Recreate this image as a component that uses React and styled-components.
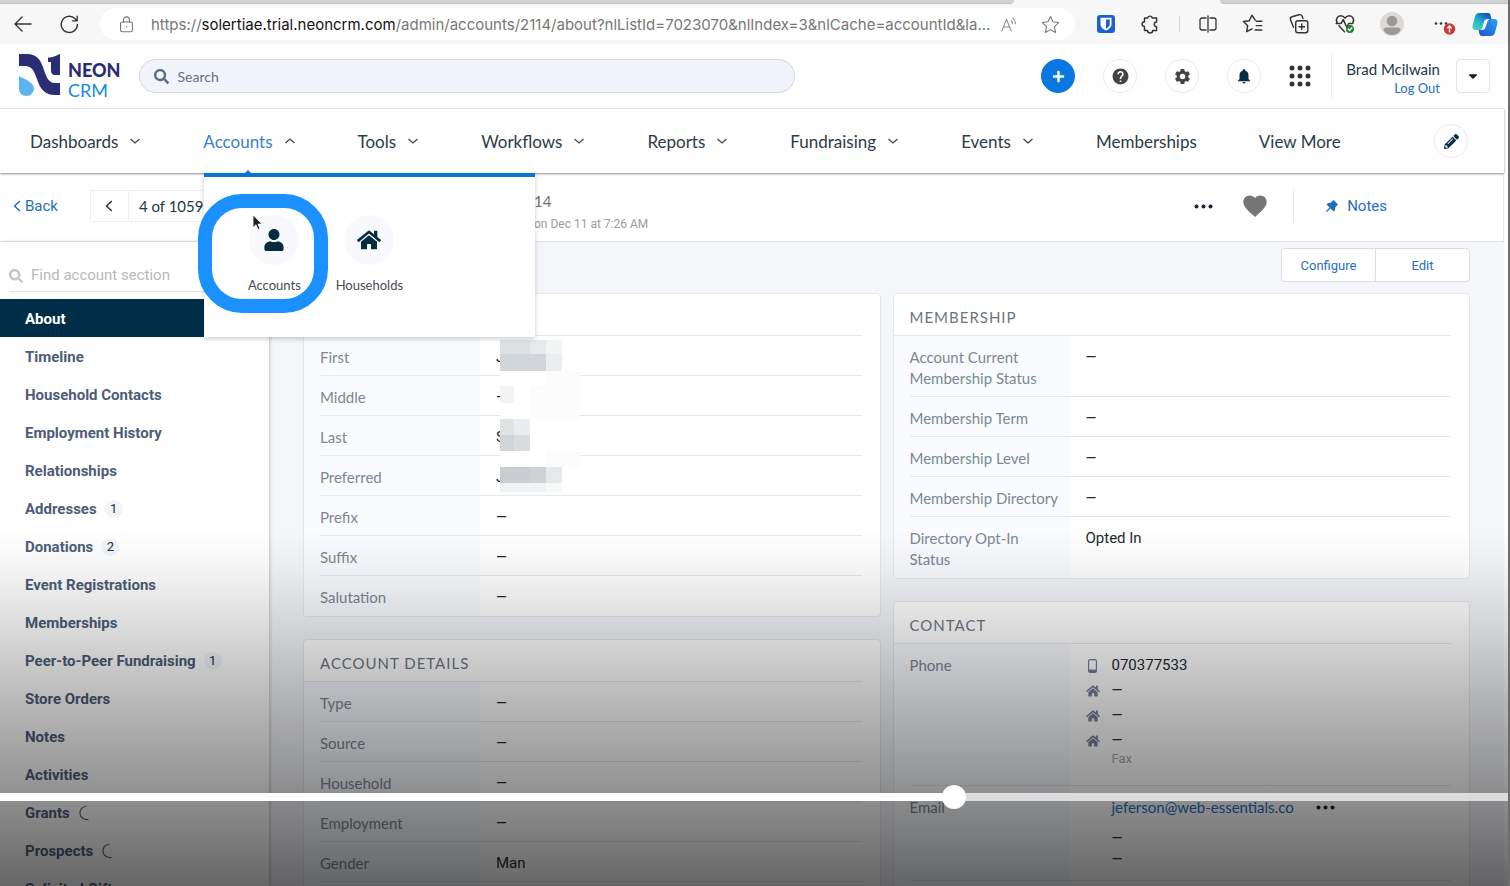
import React, { useState } from "react";
import styled, { createGlobalStyle } from "styled-components";
import {
    FaSearch,
    FaPlus,
    FaUser,
    FaHome,
    FaCaretDown,
    FaPencilAlt,
} from "react-icons/fa";
import { MdHelp, MdSettings, MdNotifications, MdFavorite } from "react-icons/md";
import { AiFillPushpin } from "react-icons/ai";

const GlobalStyle = createGlobalStyle`
    * {
        box-sizing: border-box;
    }

    body {
        margin: 0;
        font-family: Lato, sans-serif;
        font-size: 15px;
        line-height: 21px;
        color: #243746;
        background: #fff;
    }

    button, input {
        font: inherit;
        color: inherit;
        border: 0;
        padding: 0;
        margin: 0;
        background: none;
    }

    a {
        text-decoration: none;
        color: #1f70c1;
    }

    svg {
        display: block;
        flex: none;
    }
`;

const Screen = styled.div`
    position: relative;
    height: 100vh;
    overflow: hidden;
    display: flex;
    flex-direction: column;
    border-right: 2px solid #6d6d6d;
    background: #fefefe;
`;

/* ---------- browser chrome ---------- */

const TabStrip = styled.div`
    flex: none;
    display: flex;
    justify-content: flex-end;
    height: 4px;
    background: #f7f7f7;
`;

const InactiveTabs = styled.div`
    flex: ${(props) => props.$grow};
    background: #d2d2d2;
    border-bottom: 1px solid #c2c2c2;
    border-radius: ${(props) => (props.$end ? "0 0 0 6px" : "0 0 6px 0")};
`;

const TabGap = styled.div`
    flex: 206;
`;

const BrowserBar = styled.div`
    flex: none;
    display: flex;
    align-items: center;
    height: 40px;
    padding: 0 10px 0 13px;
    background: #f7f7f7;
    color: #333;
`;

const BrowserButton = styled.button`
    display: flex;
    margin-right: ${(props) => props.$after || 0}px;
`;

const AddressBar = styled.div`
    flex: 1;
    min-width: 0;
    display: flex;
    align-items: center;
    height: 32px;
    margin-right: 22px;
    padding: 0 15px 0 18px;
    border-radius: 16px;
    background: #fff;
`;

const Url = styled.div`
    flex: 1;
    min-width: 0;
    margin: 0 4px 0 16px;
    overflow: hidden;
    white-space: nowrap;
    text-overflow: ellipsis;
    font-family: Inter, sans-serif;
    font-size: 15px;
    color: #777;

    b {
        font-weight: 400;
        color: #111;
    }
`;

const BrowserTools = styled.div`
    display: flex;
    align-items: center;
    gap: 24px;
`;

const ToolDivider = styled.div`
    width: 1px;
    height: 16px;
    margin: 0 -6px;
    background: #d8d8d8;
`;

const MoreIcon = styled.svg`
    overflow: visible;
`;

/* ---------- app header ---------- */

const TopBar = styled.header`
    flex: none;
    display: flex;
    align-items: center;
    height: 65px;
    margin-right: 4px;
    padding: 0 14px 0 18px;
    border-bottom: 1px solid #ececee;
`;

const Brand = styled.a`
    display: flex;
    gap: 8px;
    margin-right: 18px;
`;

const BrandText = styled.span`
    display: flex;
    flex-direction: column;
    padding-top: 7px;
    font-size: 18px;
    line-height: 20px;
    color: #148be0;

    b {
        font-weight: 900;
        color: #2a2d74;
    }
`;

const SearchBox = styled.label`
    flex: 0 1 656px;
    display: flex;
    align-items: center;
    gap: 9px;
    height: 34px;
    padding: 0 14px;
    border: 1px solid #d0d5df;
    border-radius: 17px;
    background: #f1f4fa;
    color: #5d6a83;

    input {
        flex: 1;
        font-size: 14px;
        outline: 0;
    }

    input::placeholder {
        color: #66717f;
        opacity: 1;
    }
`;

const Actions = styled.div`
    display: flex;
    align-items: center;
    gap: 28px;
    margin-left: auto;
`;

const RoundButton = styled.button`
    display: flex;
    align-items: center;
    justify-content: center;
    width: 34px;
    height: 34px;
    border: 1px solid ${(props) => (props.$primary ? "#0a78e0" : "#ebebee")};
    border-radius: 50%;
    background: ${(props) => (props.$primary ? "#0a78e0" : "#fff")};
    color: ${(props) => (props.$primary ? "#fff" : props.$color || "#444")};
`;

const UserBlock = styled.div`
    margin: 0 16px 0 20px;
    padding: 6px 0 0 14px;
    border-left: 1px solid #ececee;
    text-align: right;
    line-height: 19px;

    a {
        display: block;
        font-size: 13px;
    }
`;

const UserMenuButton = styled.button`
    display: flex;
    align-items: center;
    justify-content: center;
    width: 34px;
    height: 34px;
    border: 1px solid #e6e6e9;
    border-radius: 4px;
    color: #222;
`;

const NavBar = styled.nav`
    position: relative;
    z-index: 2;
    flex: none;
    display: flex;
    align-items: center;
    gap: 62px;
    height: 64px;
    margin-right: 4px;
    padding: 0 36px 0 30px;
    background: #fefefe;
    box-shadow: 0 1px 2px #8f8f8f;

    > ${RoundButton} {
        margin-left: auto;
    }
`;

const NavItem = styled.div`
    position: relative;
    display: flex;
    align-items: center;
    height: 64px;
`;

const NavButton = styled.button`
    display: flex;
    align-items: center;
    gap: 11px;
    font-size: 17px;
    white-space: nowrap;
    color: ${(props) => (props.$open ? "#3a7fd0" : "#2b3c49")};

    svg {
        color: #3c4852;
    }
`;

const MegaMenu = styled.div`
    position: absolute;
    top: 64px;
    left: 1px;
    display: flex;
    gap: 21px;
    width: 331px;
    height: 164px;
    padding: 38px 33px;
    border-top: 4px solid #0a74d6;
    background: #fff;
    box-shadow: 0 2px 5px rgba(0, 0, 0, 0.2);

    &::before {
        content: "";
        position: absolute;
        top: -7px;
        left: 40px;
        border: 4px solid transparent;
        border-top: 0;
        border-bottom-color: #0a74d6;
    }
`;

const MenuTile = styled.a`
    display: flex;
    flex-direction: column;
    align-items: center;
    gap: 10px;
    width: 74px;
    font-size: 13px;
    color: #444c54;
`;

const TileIcon = styled.span`
    display: flex;
    align-items: center;
    justify-content: center;
    width: 50px;
    height: 50px;
    border-radius: 50%;
    background: #f8f9fc;
    color: #052c40;
`;

/* ---------- record header ---------- */

const RecordBar = styled.div`
    flex: none;
    display: flex;
    align-items: center;
    height: 69px;
    margin-right: 4px;
    padding: 0 116px 2px 13px;
    border-right: 1px solid #e6e6e8;
    border-bottom: 1px solid #e2e3e6;
    background: #fff;
`;

const BackLink = styled.a`
    display: flex;
    align-items: center;
    gap: 4px;
    margin-right: 32px;
    font-family: Roboto, sans-serif;
`;

const Pager = styled.div`
    display: flex;
    align-items: center;
    height: 32px;
    width: 444px;
    border: 1px solid #eee;

    button {
        display: flex;
        align-items: center;
        justify-content: center;
        width: 38px;
        height: 30px;
        margin-right: 10px;
        border-right: 1px solid #eee;
    }
`;

const RecordMeta = styled.div`
    margin-top: 14px;
    line-height: 23px;
    color: #6b7076;

    small {
        display: block;
        font-family: Roboto, sans-serif;
        font-size: 12px;
        color: #9a9da1;
    }
`;

const RecordTools = styled.div`
    display: flex;
    align-items: center;
    gap: 28px;
    margin-left: auto;
    color: #757575;
`;

const NotesLink = styled.a`
    display: flex;
    align-items: center;
    gap: 7px;
    height: 32px;
    margin-left: -4px;
    padding-left: 30px;
    border-left: 1px solid #e6e6e8;
    font-family: Roboto, sans-serif;
`;

/* ---------- body ---------- */

const Body = styled.div`
    flex: 1;
    min-height: 0;
    display: flex;
    margin-right: 4px;
    background: #f5f6fa;
`;

const Sidebar = styled.aside`
    flex: none;
    width: 269px;
    background: #fff;
    box-shadow: 1px 0 3px #c0c2c8;
    font-family: Roboto, sans-serif;
    color: #3d4d66;
`;

const SectionSearch = styled.label`
    display: flex;
    align-items: center;
    gap: 8px;
    height: 34px;
    margin: 16px 12px 7px 9px;
    padding-top: 2px;
    border-bottom: 1px solid #e4e4e6;
    color: #c0c2c5;

    input {
        flex: 1;
        min-width: 0;
        outline: 0;
    }

    input::placeholder {
        color: #b6b9bd;
        opacity: 1;
    }
`;

const SectionLink = styled.a`
    display: flex;
    align-items: center;
    gap: 8px;
    height: 38px;
    padding: 2px 0 0 25px;
    font-size: 15px;
    font-weight: 700;
    color: ${(props) => (props.$active ? "#fff" : "#4d5c78")};
    background: ${(props) => (props.$active ? "#002e48" : "transparent")};
`;

const Count = styled.span`
    min-width: 18px;
    height: 18px;
    border-radius: 9px;
    background: #f1f4f9;
    text-align: center;
    font-size: 13px;
    font-weight: 400;
    line-height: 18px;
    color: #16324a;
`;

const Content = styled.main`
    flex: 1;
    padding: 6px 34px 0 34px;
`;

const ButtonGroup = styled.div`
    display: flex;
    width: 189px;
    height: 34px;
    margin: 0 0 11px auto;
    border: 1px solid #dcdee4;
    border-radius: 4px;
    background: #fff;

    button {
        flex: 1;
        font-family: Roboto, sans-serif;
        font-size: 13px;
        color: #1f70c1;
    }

    button + button {
        border-left: 1px solid #dcdee4;
    }
`;

const Columns = styled.div`
    display: grid;
    grid-template-columns: 1fr 1fr;
    align-items: start;
    gap: 12px;
`;

const Column = styled.div`
    display: grid;
    gap: 22px;
`;

const CardBox = styled.section`
    position: relative;
    border: 1px solid #e6e7eb;
    border-radius: 4px;
    background: #fff;
`;

const CardTitle = styled.h2`
    height: 42px;
    margin: 0 18px 0 0;
    padding: 13px 0 0 16px;
    border-bottom: 1px solid #e6e8ec;
    font-size: 15px;
    line-height: 20px;
    font-weight: 400;
    letter-spacing: 1px;
    text-transform: uppercase;
    color: #6d767f;
`;

const Fields = styled.dl`
    margin: 0;
    padding: 0 18px 0 16px;
    background: linear-gradient(#f9fbff, #f9fbff) 0 0 / 176px 100% no-repeat;
`;

const Field = styled.div`
    display: flex;
    min-height: ${(props) => props.$height || 40}px;
    padding: 11px 0 7px;
    border-bottom: 1px solid #e6e8ec;

    &:last-child {
        border-bottom-color: transparent;
    }

    dt {
        flex: none;
        width: 176px;
        padding-right: 24px;
        color: #7d8792;
    }

    dd {
        margin: 0;
        font-family: Roboto, sans-serif;
        color: #1c2a33;
    }
`;

const Contacts = styled.div`
    display: grid;
    grid-template-columns: 14px auto;
    column-gap: 12px;
    row-gap: ${(props) => props.$rowGap || 0}px;
    align-items: center;
    justify-items: center;

    svg {
        color: #77809c;
    }
`;

const ContactValue = styled.span`
    grid-column: 2;
    justify-self: start;
    display: flex;
    align-items: center;
    gap: 22px;
    margin-bottom: ${(props) => props.$after || 0}px;

    a {
        font-family: Lato, sans-serif;
    }
`;

const Empty = styled.span`
    font-size: 14px;
`;

const PhoneNote = styled.small`
    grid-column: 2;
    justify-self: start;
    margin-top: -7px;
    font-size: 13px;
    color: #a8a8a8;
`;

const Mosaic = styled.svg`
    position: absolute;
    top: 46px;
    left: 196px;
`;

/* ---------- video player layer ---------- */

const Shade = styled.div`
    position: absolute;
    z-index: 3;
    inset: auto 0 0 0;
    height: 356px;
    pointer-events: none;
    background: linear-gradient(
        rgba(0, 0, 0, 0),
        rgba(0, 0, 0, 0.04) 10%,
        rgba(0, 0, 0, 0.12) 24%,
        rgba(0, 0, 0, 0.28) 48%,
        rgba(0, 0, 0, 0.42) 72%,
        rgba(0, 0, 0, 0.6)
    );
`;

const Ring = styled.div`
    position: absolute;
    z-index: 3;
    top: 194px;
    left: 198px;
    width: 130px;
    height: 119px;
    border: 14px solid #1b90ff;
    border-radius: 44px;
    pointer-events: none;
`;

const Pointer = styled.svg`
    position: absolute;
    z-index: 4;
    top: 214px;
    left: 252px;
`;

const Scrubber = styled.input`
    position: absolute;
    z-index: 4;
    left: 0;
    bottom: 85px;
    width: 100%;
    height: 8px;
    appearance: none;
    outline: 0;

    &::-webkit-slider-thumb {
        appearance: none;
        width: 24px;
        height: 24px;
        border-radius: 50%;
        background: #fff;
    }
`;

const Stroke = ({ size = 20, width = 1.3, children, ...rest }) => (
    <svg
        width={size}
        height={size}
        viewBox="0 0 20 20"
        fill="none"
        stroke="currentColor"
        strokeWidth={width}
        strokeLinecap="round"
        strokeLinejoin="round"
        {...rest}
    >
        {children}
    </svg>
);

const Chevron = ({ up }) => (
    <svg width="12" height="8" viewBox="0 0 12 8" fill="none" stroke="currentColor" strokeWidth="1.3">
        <path d={up ? "M1.5 6 6 2l4.5 4" : "M1.5 2 6 6l4.5-4"} />
    </svg>
);

const ChevronLeft = ({ width = 8, height = 12 }) => (
    <svg width={width} height={height} viewBox="0 0 8 12" fill="none" stroke="currentColor" strokeWidth="1.5">
        <path d="M6.8 1 1.6 6l5.2 5" />
    </svg>
);

const Dots = ({ color = "#16232c" }) => (
    <svg width="19" height="5" viewBox="0 0 19 5" fill={color}>
        <circle cx="2.5" cy="2.5" r="2" />
        <circle cx="9.5" cy="2.5" r="2" />
        <circle cx="16.5" cy="2.5" r="2" />
    </svg>
);

const Spinner = () => (
    <svg width="12" height="16" viewBox="0 0 12 16" fill="none" stroke="#666" strokeWidth="1.2">
        <path d="M8.5 1C4 2 1.5 5 2 9c.5 3.5 4 6 8.5 5.5" />
    </svg>
);

const Logo = () => (
    <svg width="42" height="44" viewBox="0 0 42 44">
        <path
            fill="#2a2d74"
            d="M1 1h8c9 0 13 5 16 13 3 9 5 16 12 16h5v12h-5c-10 0-15-6-18-16C16 18 14 13 7 13H1z"
        />
        <path fill="#2a2d74" d="M30 4.5C35 4.5 37 3 42 1v21h-4c-4 0-5-2-5-5V9h-3z" />
        <path fill="#5cb5f0" d="M1 23c5 3 15 6 15 12.5A7.500 7.500 0 0 1 8.500 43C4 43 1 40 1 35.500z" />
    </svg>
);

const BitwardenIcon = () => (
    <svg width="18" height="18" viewBox="0 0 18 18">
        <rect width="18" height="18" rx="3" fill="#1d5fd8" />
        <path d="M3.500 2.800h11v6.400c0 3-2.700 5-5.500 6.400-2.800-1.400-5.500-3.400-5.500-6.400z" fill="#fff" />
        <path d="M9 4.400h3.800v4.900c0 1.900-1.800 3.400-3.800 4.500z" fill="#1d5fd8" />
    </svg>
);

const CopilotIcon = () => (
    <svg width="26" height="25" viewBox="0 0 26 25">
        <defs>
            <linearGradient id="teal" x1="0" y1="1" x2="0.7" y2="0">
                <stop offset="0" stopColor="#56d6a8" />
                <stop offset="0.5" stopColor="#24b4d8" />
                <stop offset="1" stopColor="#1450b8" />
            </linearGradient>
            <linearGradient id="blue" x1="0" y1="1" x2="1" y2="0">
                <stop offset="0" stopColor="#1c4fd0" />
                <stop offset="1" stopColor="#29a4f7" />
            </linearGradient>
        </defs>
        <path fill="url(#teal)" d="M7.500 1H16c2 0 2.500 1.500 3 4l.5 2H16c-2 0-3 1-3.500 3l-2 6c-.5 1.500-1.500 2-3 2H4c-3 0-4-2-3.300-5L3 4.500C3.700 2 5 1 7.500 1z" />
        <path fill="url(#blue)" d="M18.500 24H10c-2 0-2.500-1.500-3-4l-.3-2H10c2 0 3-1 3.500-3l2-6c.5-1.500 1.500-2 3-2H22c3 0 4 2 3.300 5L23 20.500c-.7 2.500-2 3.500-4.500 3.500z" />
        <path fill="#fff" d="M12 9.500c.4-1.300 1.500-2.300 3-2.300h2.200c-1 .5-1.500 1.200-1.900 2.300L13.300 15c-.6 1.700-1.700 2.500-3.300 2.500H8.600c1-.5 1.500-1.200 1.800-2.300z" />
    </svg>
);

const navItems = [
    { label: "Dashboards", menu: true },
    { label: "Accounts", menu: true, open: true },
    { label: "Tools", menu: true },
    { label: "Workflows", menu: true },
    { label: "Reports", menu: true },
    { label: "Fundraising", menu: true },
    { label: "Events", menu: true },
    { label: "Memberships" },
    { label: "View More" },
];

const sections = [
    { label: "About", active: true },
    { label: "Timeline" },
    { label: "Household Contacts" },
    { label: "Employment History" },
    { label: "Relationships" },
    { label: "Addresses", count: 1 },
    { label: "Donations", count: 2 },
    { label: "Event Registrations" },
    { label: "Memberships" },
    { label: "Peer-to-Peer Fundraising", count: 1 },
    { label: "Store Orders" },
    { label: "Notes" },
    { label: "Activities" },
    { label: "Grants", loading: true },
    { label: "Prospects", loading: true },
    { label: "Solicited Gifts" },
];

const empty = <Empty>—</Empty>;

const nameFields = [
    ["First", "J"],
    ["Middle", empty],
    ["Last", "S"],
    ["Preferred", "J"],
    ["Prefix", empty],
    ["Suffix", empty],
    ["Salutation", empty],
];

const detailFields = [
    ["Type", empty],
    ["Source", empty],
    ["Household", empty],
    ["Employment", empty],
    ["Gender", "Man"],
    ["", ""],
];

const membershipFields = [
    ["Account Current Membership Status", empty],
    ["Membership Term", empty],
    ["Membership Level", empty],
    ["Membership Directory", empty],
    ["Directory Opt-In Status", "Opted In"],
];

// x, y, width, height, fill
const mosaicCells = [
    [0, 0, 30, 14, "#dfe2e4"],
    [30, 0, 16, 14, "#e7e9ea"],
    [46, 0, 16, 14, "#f3f4f4"],
    [0, 14, 46, 17, "#d1d6da"],
    [46, 14, 16, 17, "#ebedee"],
    [46, 31, 34, 15, "#fcfcfc"],
    [0, 46, 14, 17, "#f3f3f3"],
    [30, 46, 50, 33, "#fcfcfc"],
    [0, 79, 14, 16, "#e0e3e4"],
    [14, 79, 16, 16, "#ebecee"],
    [0, 95, 14, 16, "#cfd5d9"],
    [14, 95, 16, 16, "#d8dcdf"],
    [46, 111, 34, 16, "#fcfcfc"],
    [0, 127, 30, 16, "#c8ced2"],
    [30, 127, 16, 16, "#ced2d5"],
    [46, 127, 16, 16, "#e5e9ea"],
    [0, 143, 46, 9, "#f0f2f3"],
    [46, 143, 16, 9, "#f7f8f8"],
];

const Card = ({ title, fields, children }) => (
    <CardBox>
        <CardTitle>{title}</CardTitle>
        <Fields>
            {fields.map(([label, value, height]) => (
                <Field key={label} $height={height}>
                    <dt>{label}</dt>
                    <dd>{value}</dd>
                </Field>
            ))}
        </Fields>
        {children}
    </CardBox>
);

const PhoneList = () => (
    <Contacts $rowGap={4}>
        <svg width="9" height="14" viewBox="0 0 9 14">
            <rect x="0.6" y="0.6" width="7.8" height="12.8" rx="1.5" fill="none" stroke="currentColor" strokeWidth="1.2" />
            <path d="M1 10.500h7V13H1z" fill="currentColor" />
        </svg>
        <ContactValue>070377533</ContactValue>
        <FaHome size={14} />
        <ContactValue>{empty}</ContactValue>
        <FaHome size={14} />
        <ContactValue>{empty}</ContactValue>
        <FaHome size={14} />
        <ContactValue>{empty}</ContactValue>
        <PhoneNote>Fax</PhoneNote>
    </Contacts>
);

const EmailList = () => (
    <Contacts>
        <ContactValue $after={10}>
            <a href="#email">jeferson@web-essentials.co</a>
            <Dots />
        </ContactValue>
        <ContactValue>{empty}</ContactValue>
        <ContactValue>{empty}</ContactValue>
    </Contacts>
);

const contactFields = [
    ["Phone", <PhoneList />, 142],
    ["Email", <EmailList />, 95],
    ["", ""],
];

const Browser = () => (
    <>
        <TabStrip>
            <InactiveTabs $grow={1014} />
            <TabGap />
            <InactiveTabs $grow={288} $end />
        </TabStrip>
        <BrowserBar>
            <BrowserButton aria-label="Back" $after={26}>
                <Stroke size={20} width={1.4}>
                    <path d="M18 10H2m7-7-7 7 7 7" />
                </Stroke>
            </BrowserButton>
            <BrowserButton aria-label="Reload" $after={20}>
                <Stroke size={21} width={1.3}>
                    <path d="M17.500 10a7.700 7.700 0 1 1-2.200-5.500L17 6.200M17.300 2v4.500h-4.500" />
                </Stroke>
            </BrowserButton>
            <AddressBar>
                <Stroke size={17} color="#777">
                    <rect x="3" y="7" width="14" height="11.5" rx="2" />
                    <path d="M6.500 7V4.500a3.500 3.500 0 0 1 7 0V7M10 12.500v.3" />
                </Stroke>
                <Url>
                    https://<b>solertiae.trial.neoncrm.com</b>
                    /admin/accounts/2114/about?nlListId=7023070&nlIndex=3&nlCache=accountId&la...
                </Url>
                <BrowserButton aria-label="Read aloud" $after={23}>
                    <Stroke size={17} color="#888">
                        <path d="M1 17.500 6.500 4 12 17.500M3 13h7M12 5.500c1 .8 1.500 2 1.500 3.500M14 2.500c2 1.500 3 3.800 3 6.500" />
                    </Stroke>
                </BrowserButton>
                <BrowserButton aria-label="Favorite">
                    <Stroke size={19} width={1.1} color="#777">
                        <path d="m10 1.500 2.600 5.600 6 .8-4.400 4.300 1.100 6.200L10 15.400l-5.300 3 1.100-6.200L1.400 7.900l6-.8z" />
                    </Stroke>
                </BrowserButton>
            </AddressBar>
            <BrowserTools>
                <BitwardenIcon />
                <Stroke size={22}>
                    <path d="M5 4.500h2.800a2.300 2.300 0 0 1 4.400 0H16v3.600a2 2 0 0 0 0 4.300v3.500h-3.600a2.300 2.300 0 0 1-4.600 0H5v-3.600a2.200 2.200 0 0 1 0-4.400z" />
                </Stroke>
                <ToolDivider />
                <Stroke size={20}>
                    <path d="M8 4H4a2 2 0 0 0-2 2v8a2 2 0 0 0 2 2h4M12 4h4a2 2 0 0 1 2 2v8a2 2 0 0 1-2 2h-4M10 2v16" />
                </Stroke>
                <Stroke size={22}>
                    <path d="M12 6.500 9 2 6.600 7l-5.300.7L5.200 11.500l-1 5.500L9 14.400M13 7.500h5M13 11.500h5M12 15.500h6" />
                </Stroke>
                <Stroke size={22}>
                    <rect x="7" y="7" width="11" height="11" rx="2" />
                    <path d="M12.500 10v5M10 12.500h5M5 13 2.300 6.200c-.5-1.300 0-2.300 1.300-2.800l6.400-1.800c1.500-.4 2.500.2 3 1.500l.6 2" />
                </Stroke>
                <Stroke size={22}>
                    <path d="M3 9.500C.8 5.500 3.500 2.500 6 2.500c2 0 3.200 1 4 2.200.8-1.200 2-2.200 4-2.200 2.500 0 5.200 3 3 7M4.500 11.500 9.500 17M2 9.500h4.500L8.500 6l3 7 2-3.500h3" />
                    <circle cx="14.5" cy="14.5" r="3" fill="#27802f" stroke="#27802f" />
                    <path d="m13 14.600 1.200 1.200 2-2.300" stroke="#fff" />
                </Stroke>
                <svg width="24" height="24" viewBox="0 0 24 24">
                    <circle cx="12" cy="12" r="12" fill="#dcdad8" />
                    <circle cx="12" cy="9" r="5.3" fill="#9b9896" />
                    <path d="M3.500 18c0-1.600 1-2.500 2.500-2.500h12c1.500 0 2.500.9 2.500 2.500-1.500 3.200-4.800 5-8.500 5s-7-1.800-8.500-5z" fill="#9b9896" />
                </svg>
                <MoreIcon width="20" height="24" viewBox="-6 0 20 24">
                    <g fill="#333">
                        <circle cx="2" cy="11.5" r="1.3" />
                        <circle cx="7" cy="11.5" r="1.3" />
                        <circle cx="12" cy="11.5" r="1.3" />
                    </g>
                    <circle cx="15.5" cy="17" r="5.8" fill="#d03a36" />
                    <path d="M15.500 20.500v-6M13.300 16.200l2.200-2.200 2.200 2.200" fill="none" stroke="#fff" strokeWidth="1.3" />
                </MoreIcon>
                <CopilotIcon />
            </BrowserTools>
        </BrowserBar>
    </>
);

const Header = () => (
    <TopBar>
        <Brand href="#home">
            <Logo />
            <BrandText>
                <b>NEON</b>
                CRM
            </BrandText>
        </Brand>
        <SearchBox>
            <FaSearch size={15} />
            <input type="text" placeholder="Search" aria-label="Search" />
        </SearchBox>
        <Actions>
            <RoundButton $primary aria-label="Add">
                <FaPlus size={13} />
            </RoundButton>
            <RoundButton aria-label="Help">
                <MdHelp size={19} />
            </RoundButton>
            <RoundButton aria-label="Settings">
                <MdSettings size={19} />
            </RoundButton>
            <RoundButton aria-label="Notifications" $color="#062f42">
                <MdNotifications size={18} />
            </RoundButton>
            <svg width="22" height="22" viewBox="0 0 22 22" fill="#333">
                {[3, 11, 19].map((y) =>
                    [3, 11, 19].map((x) => (
                        <circle key={`${x}-${y}`} cx={x} cy={y} r="2.5" />
                    ))
                )}
            </svg>
        </Actions>
        <UserBlock>
            Brad Mcilwain
            <a href="#logout">Log Out</a>
        </UserBlock>
        <UserMenuButton aria-label="User menu">
            <FaCaretDown size={14} />
        </UserMenuButton>
    </TopBar>
);

const Navigation = () => (
    <NavBar>
        {navItems.map(({ label, menu, open }) => (
            <NavItem key={label}>
                <NavButton $open={open}>
                    {label}
                    {menu && <Chevron up={open} />}
                </NavButton>
                {open && (
                    <MegaMenu>
                        <MenuTile href="#accounts">
                            <TileIcon>
                                <FaUser size={22} />
                            </TileIcon>
                            Accounts
                        </MenuTile>
                        <MenuTile href="#households">
                            <TileIcon>
                                <FaHome size={24} />
                            </TileIcon>
                            Households
                        </MenuTile>
                    </MegaMenu>
                )}
            </NavItem>
        ))}
        <RoundButton aria-label="Edit navigation" $color="#062f42">
            <FaPencilAlt size={15} />
        </RoundButton>
    </NavBar>
);

const RecordHeader = () => (
    <RecordBar>
        <BackLink href="#back">
            <ChevronLeft />
            Back
        </BackLink>
        <Pager>
            <button aria-label="Previous account">
                <ChevronLeft />
            </button>
            4 of 1059
        </Pager>
        <RecordMeta>
            14
            <small>on Dec 11 at 7:26 AM</small>
        </RecordMeta>
        <RecordTools>
            <Dots />
            <MdFavorite size={28} />
            <NotesLink href="#notes">
                <AiFillPushpin size={16} />
                Notes
            </NotesLink>
        </RecordTools>
    </RecordBar>
);

const App = () => {
    const [position, setPosition] = useState(635);

    return (
        <Screen>
            <GlobalStyle />
            <Browser />
            <Header />
            <Navigation />
            <RecordHeader />
            <Body>
                <Sidebar>
                    <SectionSearch>
                        <FaSearch size={14} />
                        <input
                            type="text"
                            placeholder="Find account section"
                            aria-label="Find account section"
                        />
                    </SectionSearch>
                    {sections.map(({ label, active, count, loading }) => (
                        <SectionLink key={label} href="#section" $active={active}>
                            {label}
                            {count && <Count>{count}</Count>}
                            {loading && <Spinner />}
                        </SectionLink>
                    ))}
                </Sidebar>
                <Content>
                    <ButtonGroup>
                        <button>Configure</button>
                        <button>Edit</button>
                    </ButtonGroup>
                    <Columns>
                        <Column>
                            <Card title="" fields={nameFields}>
                                <Mosaic width="80" height="152" viewBox="0 0 80 152">
                                    <rect width="80" height="152" fill="#fff" />
                                    {mosaicCells.map(([x, y, w, h, fill]) => (
                                        <rect key={`${x}-${y}`} x={x} y={y} width={w} height={h} fill={fill} />
                                    ))}
                                </Mosaic>
                            </Card>
                            <Card title="Account Details" fields={detailFields} />
                        </Column>
                        <Column>
                            <Card title="Membership" fields={membershipFields} />
                            <Card title="Contact" fields={contactFields} />
                        </Column>
                    </Columns>
                </Content>
            </Body>
            <Shade />
            <Ring />
            <Pointer width="12" height="17" viewBox="0 0 12 17">
                <path
                    d="M1 1v12.500l3-2.700 2 4.700 2-.9-2-4.500h4z"
                    fill="#222"
                    stroke="#fff"
                    strokeWidth="0.8"
                />
            </Pointer>
            <Scrubber
                type="range"
                min="0"
                max="1000"
                value={position}
                aria-label="Video position"
                onChange={(e) => setPosition(Number(e.target.value))}
                style={{
                    background: `linear-gradient(to right, #fff ${position / 10}%, rgba(240, 240, 240, 0.8) ${position / 10}%)`,
                }}
            />
        </Screen>
    );
};

export default App;
